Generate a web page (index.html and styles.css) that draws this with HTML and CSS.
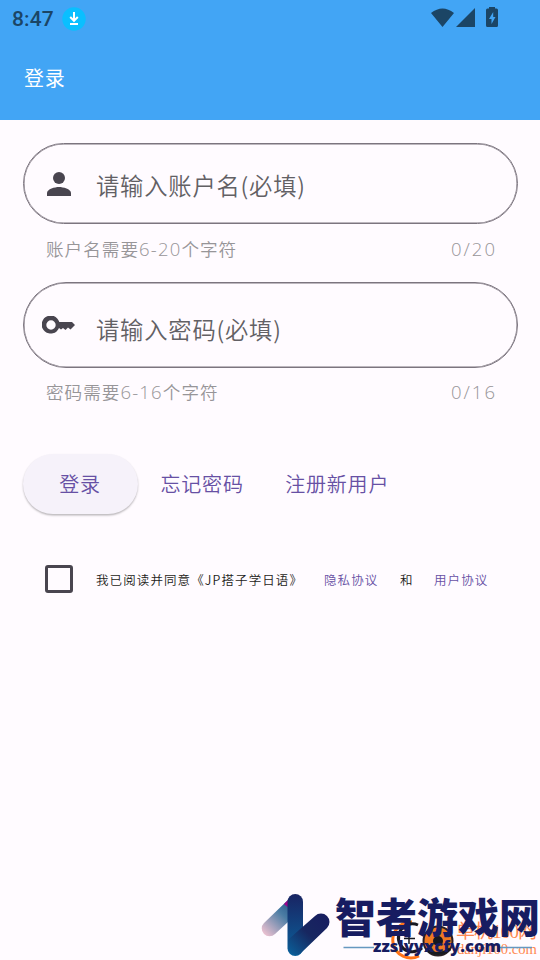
FILE: index.html
```html
<!DOCTYPE html>
<html lang="zh-CN">
<head>
<meta charset="utf-8">
<title>登录</title>
<link rel="stylesheet" href="styles.css">
</head>
<body>
<header class="appbar">
  <div class="status">
    <span class="time">8:47</span>
    <svg class="download" viewBox="0 0 24 24"><circle cx="12" cy="12" r="11.7" fill="#0abfff"/><path d="M12 5v8M8.2 10l3.8 3.8 3.8-3.8M8 17h8" fill="none" stroke="#fff" stroke-width="2"/></svg>
    <svg class="signals" viewBox="0 0 70 22" fill="#1b4565"><path d="M0 6Q11.5-3 23 6L11.5 20zM25 20L44 1v19zM55 3q0-1.500 1.500-1.500H58V0h6v1.500h1.500Q67 1.500 67 3v15.500q0 1.500-1.500 1.500h-9Q55 20 55 18.500z"/><path d="M62.200 5l-4.200 7h2.500v5l4-7h-2.300z" fill="#42a5f5"/></svg>
  </div>
  <h1 class="title">登录</h1>
</header>
<main class="form">
  <label class="field account">
    <svg class="person" viewBox="0 0 24 24"><circle cx="12" cy="6" r="6"/><path d="M0 24v-3c0-4 8-6 12-6s12 2 12 6v3z"/></svg>
    <span>请输入账户名(必填)</span>
  </label>
  <div class="helper"><span>账户名需要<span class="range">6-20</span>个字符</span><span class="count">0/20</span></div>
  <label class="field secret">
    <svg class="key" viewBox="0 0 33 18"><path fill-rule="evenodd" d="M17.300 6H30l3 3-4.500 4.500-2.500-2-2.500 2.500-2.500-2-2 1.500-2-1.500A9 9 0 1 1 17.300 6zM9 4.300a4.700 4.700 0 1 0 0 9.400 4.700 4.700 0 0 0 0-9.400z"/></svg>
    <span>请输入密码(必填)</span>
  </label>
  <div class="helper"><span>密码需要<span class="range">6-16</span>个字符</span><span class="count">0/16</span></div>
  <div class="actions">
    <button class="login">登录</button>
    <a class="forgot">忘记密码</a>
    <a class="register">注册新用户</a>
  </div>
  <div class="agreement">
    <span class="checkbox"></span>
    <span class="read">我已阅读并同意《JP搭子学日语》</span>
    <a class="privacy">隐私协议</a>
    <span class="and">和</span>
    <a class="terms">用户协议</a>
  </div>
</main>
<svg class="watermark" viewBox="260 880 280 80">
  <defs>
    <linearGradient id="tail" x1="1" y1="0" x2="0" y2="1"><stop offset="0" stop-color="#123d77"/><stop offset=".45" stop-color="#4a7ca4"/><stop offset="1" stop-color="#ffc9d6"/></linearGradient>
    <linearGradient id="stem" x1="0" y1="0" x2="0" y2="1"><stop offset="0" stop-color="#192463"/><stop offset="1" stop-color="#0a629c"/></linearGradient>
    <linearGradient id="arm" x1="1" y1="0" x2="0" y2="1"><stop offset="0" stop-color="#181c60"/><stop offset=".5" stop-color="#172760"/><stop offset="1" stop-color="#0a629c"/></linearGradient>
  </defs>
  <path d="M264 923L290 898L301 910L275 934A7.500 7.500 0 0 1 264 923z" fill="url(#tail)"/>
  <path d="M284 904l6-6v11z" fill="#a0008b"/>
  <rect x="287.500" y="894" width="15.500" height="62" rx="7.750" fill="url(#stem)"/>
  <path d="M290 938L315 916A8 8 0 0 1 327 928L301 953A8 8 0 0 1 288 948V940z" fill="url(#arm)"/>
  <g class="site" fill="#ff8951"><text x="456" y="938" font-size="19" textLength="81">单机100网</text><text x="457" y="954" font-size="14" textLength="80" lengthAdjust="spacingAndGlyphs">danji100.com</text></g>
  <path d="M412 922a18 18 0 1 0 7 34" fill="none" stroke="#ff7417" stroke-width="3"/>
  <path d="M418 925a14 14 0 1 0 4 23" fill="none" stroke="#171821" stroke-width="3"/>
  <path d="M409 933v11M404 938.500h11" stroke="#171821" stroke-width="1.500"/>
  <circle cx="438" cy="941" r="14.500" fill="#f07822" stroke="#2a2025" stroke-width="2"/>
  <circle cx="438" cy="941" r="5" fill="#171821"/><path d="M426 949q12 9 24 0" fill="none" stroke="#171821" stroke-width="3"/>
  <path d="M343.500 947.500H374M500 947.500h32" stroke="#6698c0" stroke-width="1.300"/>
  <text class="brand" x="335" y="933" textLength="205">智者游戏网</text>
  <text class="url" x="373" y="952" textLength="128" lengthAdjust="spacingAndGlyphs">zzslyyxcfy.com</text>
</svg>
</body>
</html>
```

FILE: styles.css
```css
* { box-sizing: border-box; }
body {
  margin: 0;
  width: 540px;
  height: 960px;
  overflow: hidden;
  background: #fffbff;
  font-family: "Noto Sans CJK SC", sans-serif;
  font-weight: 350;
}
.appbar { height: 120px; background: #42a5f5; }
.status { display: flex; align-items: center; height: 36px; padding-left: 12px; color: #1b4565; }
.time { width: 50px; padding-top: 2px; font: 500 21px/36px Roboto, sans-serif; letter-spacing: .1px; }
.download { width: 24px; height: 24px; margin: 1px 0 0 -.5px; }
.signals { width: 70px; height: 22px; margin-left: 345.5px; }
.title { margin: 27px 0 0 24px; font-size: 20px; line-height: 30px; letter-spacing: .75px; font-weight: 400; color: #fff; }
.form { padding: 23px 22px 0 23px; white-space: nowrap; }
.field {
  display: flex;
  align-items: center;
  border: 1px solid #7c757f;
  box-shadow: inset 0 0 0 .5px #7c757f;
  border-radius: 43px;
  color: #626064;
  font-size: 23.3px;
  line-height: 34px;
  letter-spacing: .8px;
}
.field svg { fill: #49454f; flex: none; }
.account { height: 81px; padding: 2px 0 0 23px; }
.secret { height: 86px; padding: 8px 0 0 18px; }
.person { width: 24px; height: 24px; margin: -1px 25px 0 0; }
.key { width: 33px; height: 18px; margin: -9px 21px 0 0; }
.helper {
  display: flex;
  justify-content: space-between;
  height: 58px;
  padding: 12px 21px 0 23px;
  color: #979598;
  font-size: 17.600px;
  line-height: 26px;
  letter-spacing: 1px;
}
.secret + .helper { padding-top: 11px; }
.range, .count { font-family: "Open Sans", sans-serif; font-weight: 350; font-size: 18.500px; line-height: 20px; letter-spacing: 1.200px; }
.count { line-height: 26px; letter-spacing: 2px; }
.actions { display: flex; align-items: center; height: 62px; margin-top: 27px; color: #6750a4; font-size: 20px; letter-spacing: .8px; }
.login {
  width: 115px;
  height: 60px;
  margin-left: -.5px;
  padding: 0;
  border: 0;
  border-radius: 30px;
  background: #f6f2fa;
  box-shadow: 0 1.500px 2px #0004;
  color: inherit;
  font: inherit;
  letter-spacing: inherit;
}
.actions > * { padding-bottom: 2px; }
.forgot { margin-left: 23px; }
.register { margin-left: 41.5px; }
.agreement { display: flex; align-items: center; height: 28px; margin-top: 50px; padding-left: 22px; color: #1d1b20; font-size: 12.500px; line-height: 20px; letter-spacing: 1.100px; }
.agreement > :not(.checkbox) { padding-top: 2px; }
.checkbox { width: 28px; height: 28px; border: 3px solid #49454f; border-radius: 3px; }
.read { width: 228px; margin-left: 23px; }
.privacy, .terms { color: #6750a4; }
.privacy { width: 76px; }
.and { width: 34px; }
.watermark { position: absolute; left: 260px; top: 880px; width: 280px; height: 80px; }
.site text { font-family: "Liberation Serif", "Noto Sans CJK SC", serif; font-weight: 400; }
.brand { font-size: 41px; font-weight: 900; fill: #171c61; }
.url { font: 800 15.500px "Open Sans", sans-serif; fill: #171c61; }
```
